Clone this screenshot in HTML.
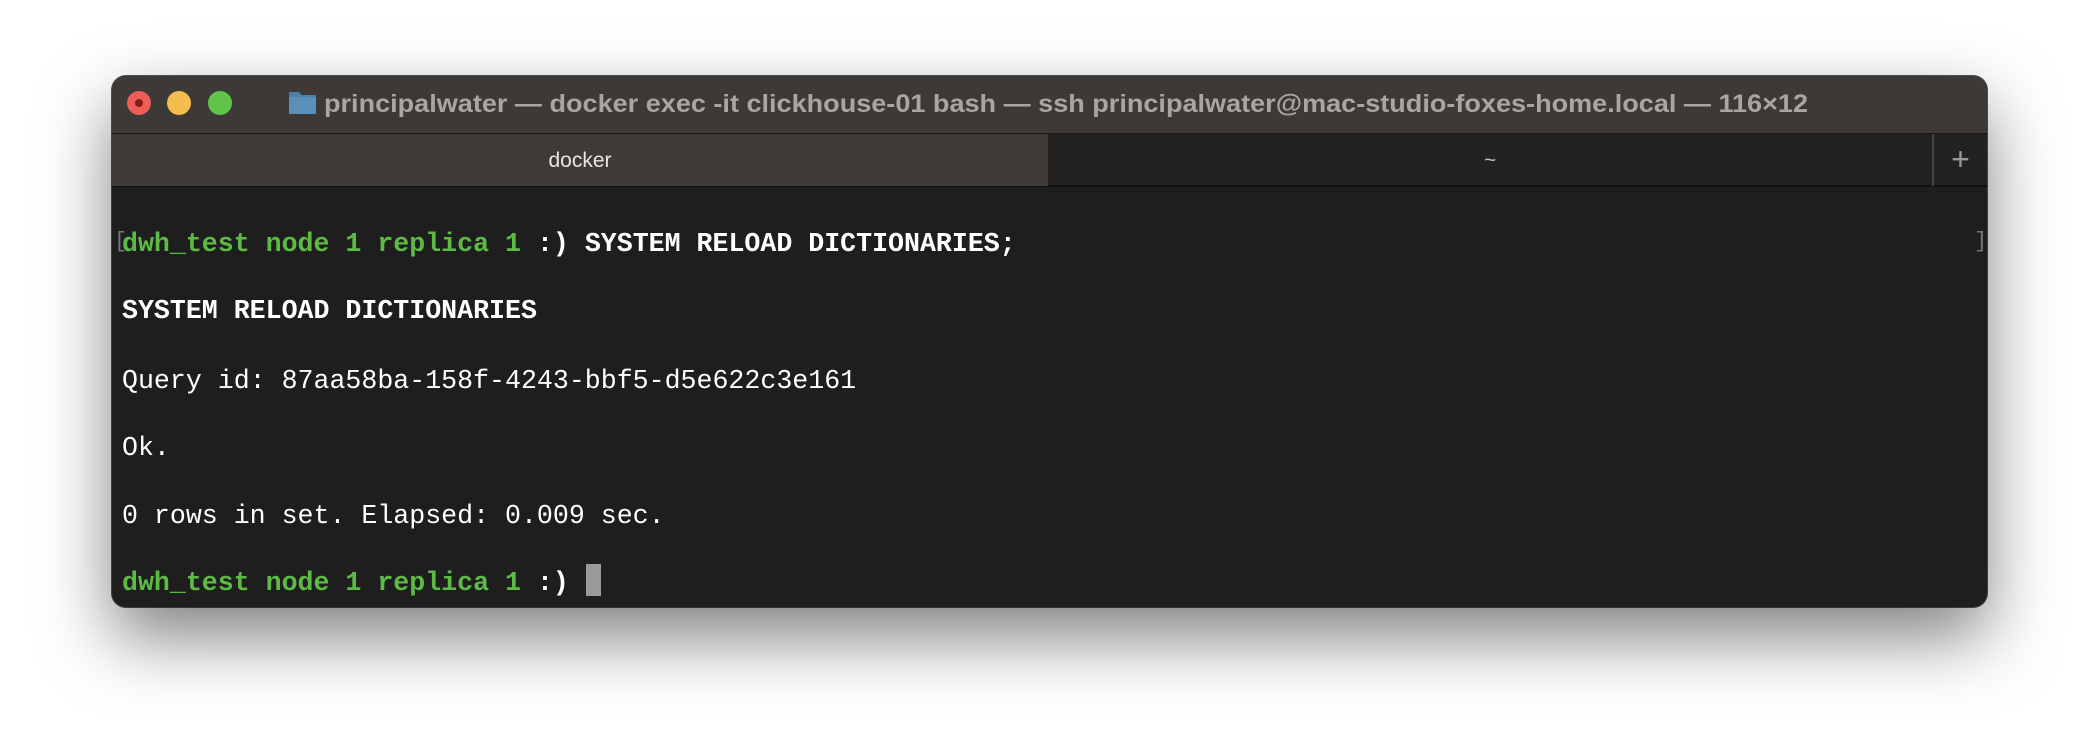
<!DOCTYPE html>
<html><head><style>
html,body{margin:0;padding:0;width:2100px;height:756px;background:#fff;overflow:hidden;}
.win{position:absolute;left:112px;top:76px;width:1875px;height:531px;border-radius:14px;background:#1e1e1e;box-shadow:0 30px 70px rgba(0,0,0,.5),0 0 0 1px #555;overflow:hidden;}
.title{position:absolute;left:0;top:0;width:100%;height:57px;background:#3d3936;}
.tabs{position:absolute;left:0;top:57px;width:100%;height:54px;background:#242221;border-top:1px solid #1a1a1a;border-bottom:2px solid #111;box-sizing:border-box;}
.dot{position:absolute;top:15px;width:24px;height:24px;border-radius:50%;}
.t{position:absolute;font-family:"Liberation Sans",sans-serif;color:#e8e6e3;font-size:21px;}
.term{position:absolute;left:10px;top:113px;font-family:"Liberation Mono",monospace;font-size:26.6px;color:#fff;font-weight:bold;}
.l{position:absolute;left:0;white-space:pre;line-height:30px;}
.g{color:#5dbb45;}
.n{font-weight:normal;}
</style></head><body>
<div class="win">
 <div class="title">
  <div class="dot" style="left:15px;background:#ec5f56;"><div style="position:absolute;left:8px;top:8px;width:8px;height:8px;border-radius:50%;background:#8a1a14"></div></div>
  <div class="dot" style="left:55px;background:#f3bd4f;"></div>
  <div class="dot" style="left:96px;background:#5ec54a;"></div>
  <svg style="position:absolute;left:176px;top:13px" width="29" height="26"><path d="M1 3h10l3 3h14v19H1z" fill="#4a7fa8"/><rect x="1" y="8" width="27" height="17" fill="#5a8fb8"/></svg>
  <svg style="position:absolute;left:212px;top:0" width="1500" height="57"><text x="0" y="36" font-family="Liberation Sans, sans-serif" font-weight="bold" font-size="25" fill="#aaa5a0" textLength="1484" lengthAdjust="spacingAndGlyphs">principalwater — docker exec -it clickhouse-01 bash — ssh principalwater@mac-studio-foxes-home.local — 116×12</text></svg>
 </div>
 <div class="tabs">
  <div style="position:absolute;left:0;top:0;width:936px;height:52px;background:#3d3a38;"></div>
  <div class="t" style="left:0;width:936px;text-align:center;top:15px;">docker</div>
  <div class="t" style="left:936px;width:884px;text-align:center;top:15px;color:#bbb;">~</div>
  <div style="position:absolute;left:1820px;top:0;width:2px;height:52px;background:#444;"></div>
  <div class="t" style="left:1822px;width:53px;text-align:center;top:7px;font-size:32px;color:#999;font-weight:300;">+</div>
 </div>
 <div style="position:absolute;left:2px;top:153px;color:#777;font-family:'Liberation Mono',monospace;font-size:22px;">[</div>
 <div style="position:absolute;left:1862px;top:153px;color:#777;font-family:'Liberation Mono',monospace;font-size:22px;">]</div>
 <div class="term">
  <div class="l" style="top:40px"><span class="g">dwh_test node 1 replica 1</span> :) SYSTEM RELOAD DICTIONARIES;</div>
  <div class="l" style="top:107px">SYSTEM RELOAD DICTIONARIES</div>
  <div class="l n" style="top:177px">Query id: 87aa58ba-158f-4243-bbf5-d5e622c3e161</div>
  <div class="l n" style="top:244px">Ok.</div>
  <div class="l n" style="top:312px">0 rows in set. Elapsed: 0.009 sec.</div>
  <div class="l" style="top:379px"><span class="g">dwh_test node 1 replica 1</span> :) </div>
 </div>
 <div style="position:absolute;left:474px;top:488px;width:15px;height:32px;background:#9a9a9a;"></div>
</div>
</body></html>
